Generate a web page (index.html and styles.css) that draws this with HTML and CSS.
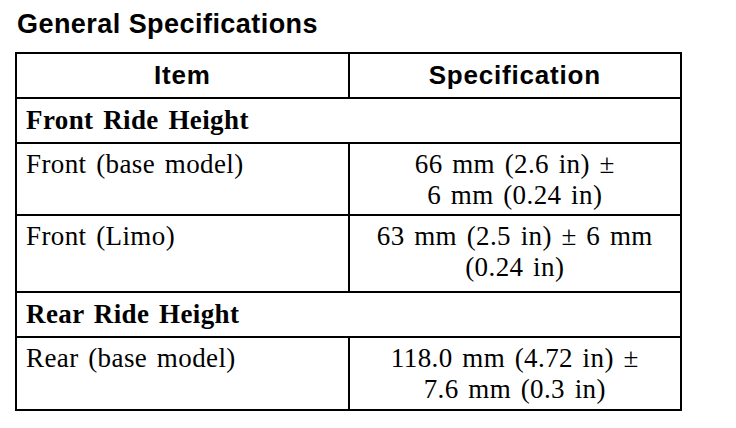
FILE: index.html
```html
<!DOCTYPE html>
<html lang="en">
<head>
  <meta charset="UTF-8" />
  <title>General Specifications</title>
  <link rel="stylesheet" href="styles.css">
</head>
<body>
  <h1 class="title">General Specifications</h1>

  <table class="spec-table">
    <thead>
      <tr>
        <th>Item</th>
        <th>Specification</th>
      </tr>
    </thead>
    <tbody>
      <tr class="section">
        <td colspan="2">Front Ride Height</td>
      </tr>
      <tr class="row-base">
        <td>Front (base model)</td>
        <td class="value">66 mm (2.6 in) ±<br>6 mm (0.24 in)</td>
      </tr>
      <tr class="row-limo">
        <td>Front (Limo)</td>
        <td class="value">63 mm (2.5 in) ± 6 mm<br>(0.24 in)</td>
      </tr>
      <tr class="section">
        <td colspan="2">Rear Ride Height</td>
      </tr>
      <tr class="row-rear">
        <td>Rear (base model)</td>
        <td class="value">118.0 mm (4.72 in) ±<br>7.6 mm (0.3 in)</td>
      </tr>
    </tbody>
  </table>
</body>
</html>
```

FILE: styles.css
```css
body {
  margin: 0;
  background: #ffffff;
  color: #000000;
  font-family: "Liberation Sans", Arial, sans-serif;
}

.title {
  margin: 0;
  padding: 9px 0 0 17px;
  font-size: 27px;
  line-height: 31px;
  font-weight: bold;
  letter-spacing: 0.45px;
}

/* Spec table */
.spec-table {
  margin: 12px 0 0 15px;
  width: 667px;
  border-collapse: collapse;
  table-layout: fixed;
}

.spec-table th,
.spec-table td {
  border: 2px solid #000;
  padding: 0 9px;
}

.spec-table th {
  height: 43px;
  font-size: 26px;
  font-weight: bold;
  letter-spacing: 0.8px;
  text-align: center;
  vertical-align: middle;
}

.spec-table td {
  font-family: "Liberation Serif", "Times New Roman", serif;
  font-size: 27px;
  line-height: 31px;
  letter-spacing: 0.4px;
  word-spacing: 2.5px;
  vertical-align: top;
  padding-top: 5px;
}

.spec-table .section td {
  height: 43px;
  font-weight: bold;
  vertical-align: middle;
  padding-top: 0;
}

.spec-table .value {
  text-align: center;
}

.row-base td { height: 65px; }
.row-limo td { height: 70px; }
.row-rear td { height: 66px; }
```
